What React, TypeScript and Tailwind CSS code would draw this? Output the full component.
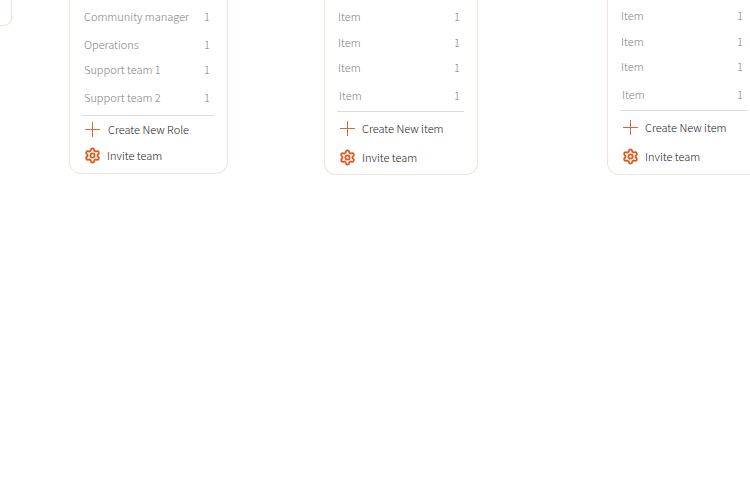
import { Settings } from "lucide-react";

interface Row {
  label: string;
  rowClass: string;
}

interface MenuCardProps {
  rows: Row[];
  createLabel: string;
  cardClass: string;
  listClass: string;
  ruleClass: string;
  createClass: string;
  inviteClass: string;
}

function PlusIcon() {
  return (
    <svg width="15" height="15" viewBox="0 0 15 15" className="shrink-0">
      <path d="M7.5 0V15M0 7.5H15" stroke="#d9693a" strokeWidth="1" fill="none" />
    </svg>
  );
}

function MenuCard({ rows, createLabel, cardClass, listClass, ruleClass, createClass, inviteClass }: MenuCardProps) {
  return (
    <div className={`shrink-0 rounded-b-[12px] border border-t-0 border-[#f0e3d9] bg-white ${cardClass}`}>
      <div className={listClass}>
        {rows.map((row, i) => (
          <div key={i} className={`flex h-[18px] items-center justify-between pb-[2px] text-[11px] font-light text-[#808080] ${row.rowClass}`}>
            <span>{row.label}</span>
            <span>1</span>
          </div>
        ))}
      </div>
      <div className={`h-px bg-[#dedcda] ${ruleClass}`} />
      <div className={`flex h-[18px] items-center pb-[2px] text-[11px] font-light text-[#222222] ${createClass}`}>
        <PlusIcon />
        <span>{createLabel}</span>
      </div>
      <div className={`flex h-[18px] items-center pb-[2px] text-[11px] font-light text-[#222222] ${inviteClass}`}>
        <Settings size={17} strokeWidth={2.6} className="shrink-0 text-[#dd5a1e]" />
        <span>Invite team</span>
      </div>
    </div>
  );
}

const roleRows: Row[] = [
  { label: "Community manager", rowClass: "" },
  { label: "Operations", rowClass: "mt-[10px]" },
  { label: "Support team 1", rowClass: "mt-[7px]" },
  { label: "Support team 2", rowClass: "mt-[10px]" },
];

const itemRows: Row[] = [
  { label: "Item", rowClass: "" },
  { label: "Item", rowClass: "mt-[8px]" },
  { label: "Item", rowClass: "mt-[7px]" },
  { label: "Item", rowClass: "mt-[10px] pl-px" },
];

export default function App() {
  return (
    <div className="h-[500px] w-[750px] overflow-hidden bg-white font-['Noto_Sans_CJK_JP',sans-serif]">
      <div className="flex items-start">
        <div className="h-[26px] w-[12px] shrink-0 rounded-br-[8px] border-r border-b border-[#f0e3d9]" />
        <MenuCard
          rows={roleRows}
          createLabel="Create New Role"
          cardClass="ml-[57px] h-[174px] w-[159px] pt-[8px]"
          listClass="pl-[14px] pr-[17px]"
          ruleClass="ml-[12px] mr-[13px] mt-[8px]"
          createClass="mt-[5px] ml-[15px] gap-[8px]"
          inviteClass="mt-[8px] ml-[14px] gap-[6px]"
        />
        <MenuCard
          rows={itemRows}
          createLabel="Create New item"
          cardClass="ml-[96px] h-[175px] w-[154px] pt-[8px]"
          listClass="pl-[13px] pr-[17px]"
          ruleClass="ml-[12px] mr-[13px] mt-[6px]"
          createClass="mt-[8px] ml-[15px] gap-[7px]"
          inviteClass="mt-[11px] ml-[14px] gap-[6px]"
        />
        <MenuCard
          rows={itemRows}
          createLabel="Create New item"
          cardClass="ml-[129px] h-[175px] w-[154px] pt-[7px]"
          listClass="pl-[13px] pr-[17px]"
          ruleClass="mx-[12px] mt-[6px]"
          createClass="mt-[8px] ml-[15px] gap-[7px]"
          inviteClass="mt-[11px] ml-[14px] gap-[6px]"
        />
      </div>
    </div>
  );
}
